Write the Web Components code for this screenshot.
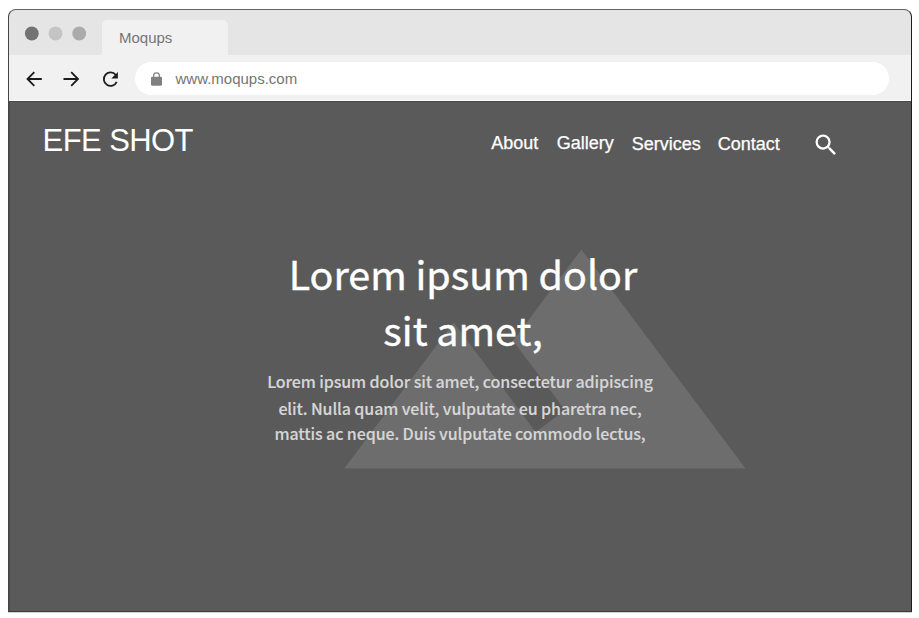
<!DOCTYPE html>
<html lang="en"><head><meta charset="utf-8"><title>Moqups</title>
<style>
body{margin:0;background:#fff;width:919px;height:618px;overflow:hidden;font-family:"Liberation Sans",Arial,sans-serif}
</style></head><body>
<browser-window>
<tab-strip slot="bar">Moqups</tab-strip>
<address-bar slot="bar">www.moqups.com</address-bar>
<site-header>EFE SHOT
<nav-link slot="nav" style="--w:65.5px">About</nav-link>
<nav-link slot="nav" style="--w:75px">Gallery</nav-link>
<nav-link slot="nav" style="--w:86px;--drop:1px">Services</nav-link>
<nav-link slot="nav" style="--w:94px;--drop:1px">Contact</nav-link>
</site-header>
<hero-banner>
<span slot="title">Lorem ipsum dolor</span><span slot="title">sit amet,</span>
<span slot="text">Lorem ipsum dolor sit amet, consectetur adipiscing</span>
<span slot="text" style="padding-top:1px;margin-bottom:-1px">elit. Nulla quam velit, vulputate eu pharetra nec,</span>
<span slot="text">mattis ac neque. Duis vulputate commodo lectus,</span>
</hero-banner>
</browser-window>
<script>
const define=(name,html)=>customElements.define(name,class extends HTMLElement{
  constructor(){super();this.attachShadow({mode:'open'}).innerHTML=html;}
});
define('browser-window',`<style>
:host{display:block;box-sizing:border-box;padding:9px 7px 5px 8px;width:919px;height:618px}
.frame{box-sizing:border-box;width:904px;height:603px;border:1px solid #3a3a3a;border-top-color:#666;border-left-color:#454545;border-right-color:#1c1c1c;border-radius:8px 8px 0 0;overflow:hidden;display:flex;flex-direction:column;background:#5a5a5a;box-shadow:0 1px #d5d5d5}
main{flex:1;border-top:1px solid #484848;box-shadow:inset 1px 0 #4d4d4d}
</style><div class="frame"><slot name="bar"></slot><main><slot></slot></main></div>`);
define('tab-strip',`<style>
:host{display:flex;height:45px;flex:none;background:#e5e5e5;align-items:flex-end;color:#757575;font-size:15px}
svg{width:93px;height:45px}
.tab{width:126px;height:35.5px;box-sizing:border-box;padding:0 0 0 17px;line-height:36px;background:#f1f1f1;border-radius:5px 5px 0 0}
</style><svg viewBox="0 0 93 45"><circle cx="22.8" cy="23.5" r="6.9" fill="#737373"/><circle cx="46.5" cy="23.5" r="6.9" fill="#c4c4c4"/><circle cx="70.2" cy="23.5" r="6.9" fill="#ababab"/><path d="M91 45a2 2 0 0 0 2-2v2z" fill="#f1f1f1"/></svg><div class="tab"><slot></slot></div>`);
define('address-bar',`<style>
:host{display:flex;height:46px;flex:none;background:#f1f1f1;align-items:flex-start;border-bottom:1px solid #fafafa;box-sizing:border-box;color:#757575;font-size:15px}
.tools{width:126px;height:44px;flex:none}
.pill{width:754px;height:33px;margin-top:7px;border-radius:17px;background:#fff;display:flex;align-items:center}
.lock{width:11px;height:14px;margin:0 13.5px 0 16px}
.u{line-height:33px}
</style><svg class="tools" viewBox="9 55 126 44" fill="none" stroke="#1c1c1c" stroke-width="1.8"><path d="M41.8 79H28M34.3 72.2L27.5 79l6.8 6.8M63.5 79h14M71.2 72.2L78 79l-6.8 6.8"/><path d="M115.8 75A6.7 6.7 0 1 0 116.7 81.8"/><path d="M117.9 72v6.6h-6.6z" fill="#1c1c1c" stroke="none"/></svg><div class="pill"><svg class="lock" viewBox="0 0 11 14"><path d="M2.6 6V3.8a2.9 2.9 0 0 1 5.8 0V6" fill="none" stroke="#808080" stroke-width="1.2"/><rect y="4.8" width="11" height="9" rx="1.2" fill="#808080"/></svg><span class="u"><slot></slot></span></div>`);
define('site-header',`<style>
:host{display:flex;height:87px;color:#fff}
.brand{width:482.3px;box-sizing:border-box;padding:22px 0 0 33.6px;font-size:31px;letter-spacing:-.58px;line-height:34px}
nav{display:flex;padding-top:31px}
svg{width:28px;height:28px;margin-top:-2px}
</style><div class="brand"><slot></slot></div><nav><slot name="nav"></slot><svg viewBox="0 0 24 24" fill="#fff"><path d="M15.5 14h-.79l-.28-.27A6.471 6.471 0 0 0 16 9.5 6.5 6.5 0 1 0 9.5 16c1.61 0 3.09-.59 4.23-1.57l.27.28v.79l5 4.99L20.49 19l-4.99-5zm-6 0C7.01 14 5 11.99 5 9.5S7.01 5 9.5 5 14 7.01 14 9.5 11.99 14 9.5 14z"/></svg></nav>`);
define('nav-link',`<style>:host{display:block;width:var(--w);padding-top:var(--drop,0);font-size:18px;line-height:20px;box-sizing:border-box;-webkit-text-stroke:.25px #fff}</style><slot></slot>`);
define('hero-banner',`<style>
:host{display:grid;font-family:"Noto Sans CJK SC","Noto Sans",sans-serif;height:300px}
svg,.copy{grid-area:1/1}
svg{width:437.8px;height:438px;margin:-49px 0 0 317.3px}
.copy{width:420px;margin-left:244px;padding-top:56px;z-index:1;display:flex;flex-direction:column;align-items:center;white-space:nowrap}
h1{margin:0;font-weight:400;font-size:39.45px;line-height:56px;color:#fff;-webkit-text-stroke:.4px #fff;display:flex;flex-direction:column;align-items:center}
p{margin:11px 0 0 -6px;font-weight:500;font-size:16px;letter-spacing:-.1px;line-height:26px;color:#d6d6d6;-webkit-text-stroke:.15px #d6d6d6;display:flex;flex-direction:column;align-items:center}
</style><svg viewBox="0 0 24 24" preserveAspectRatio="none"><path fill="#6d6d6d" d="M14 6l-3.75 5 2.85 3.8-1.6 1.2C9.81 13.75 7 10 7 10l-6 8h22L14 6z"/></svg><div class="copy"><h1><slot name="title"></slot></h1><p><slot name="text"></slot></p></div>`);
</script></body></html>
